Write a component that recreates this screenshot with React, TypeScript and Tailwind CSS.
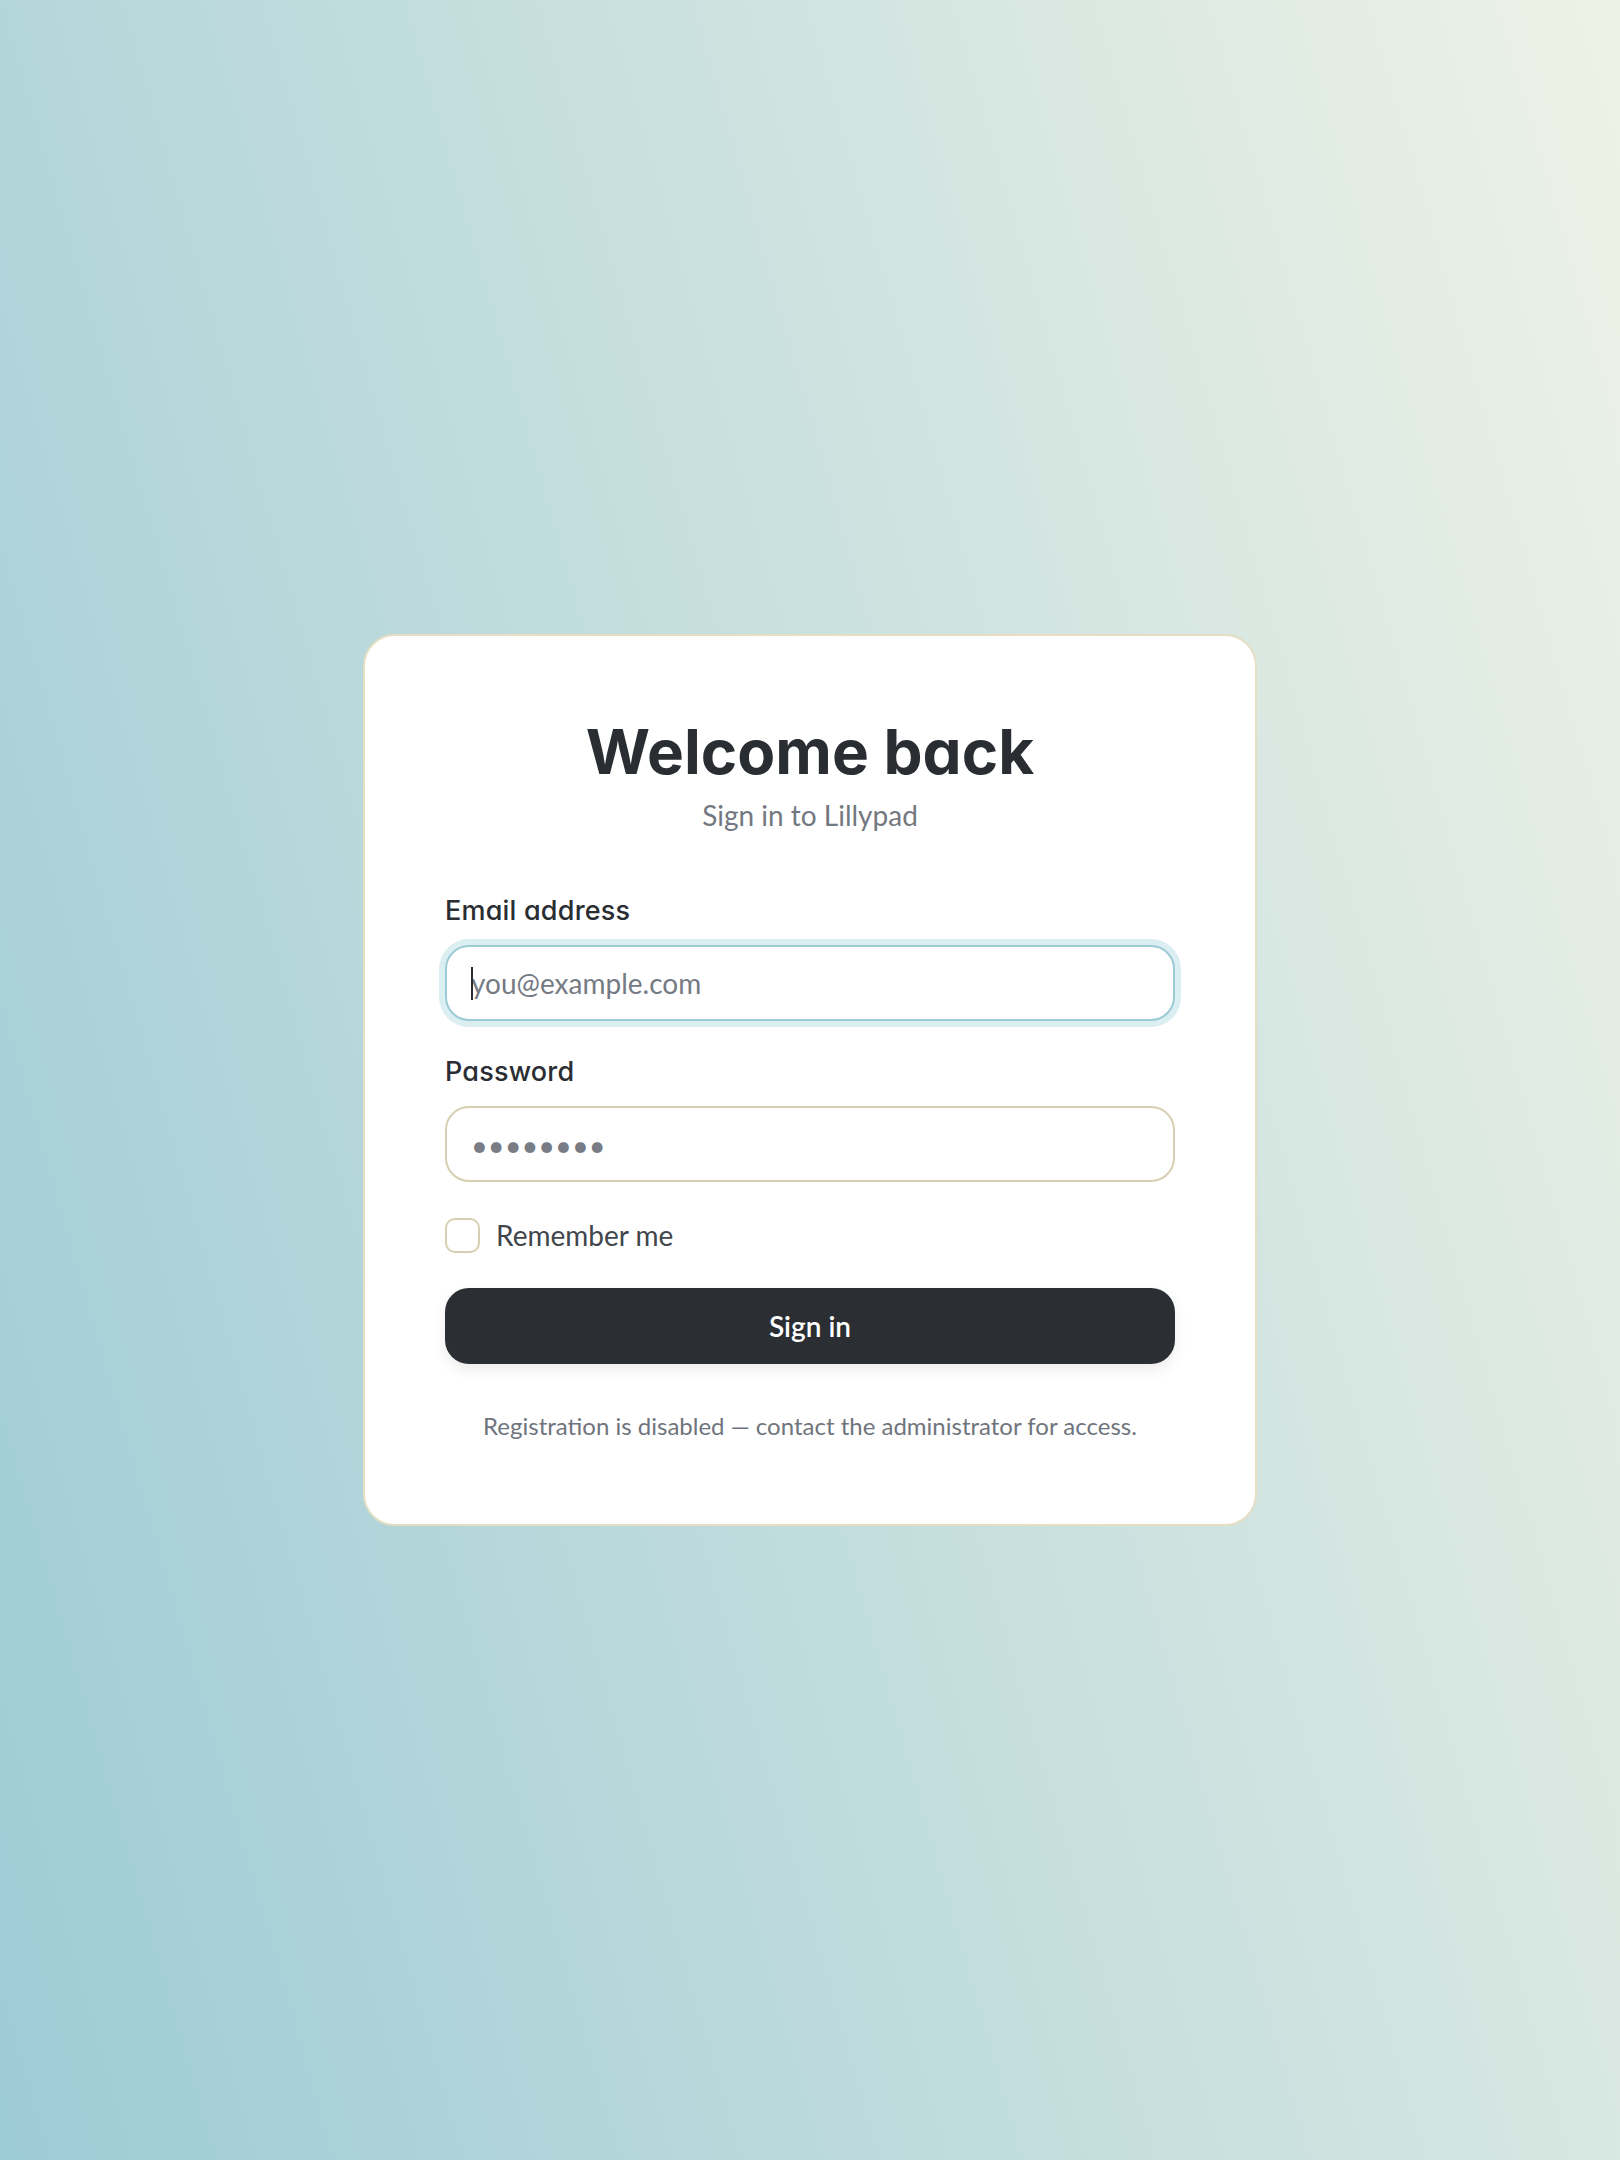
import React from "react";

export default function App() {
  return (
    <div className="min-h-screen w-full flex items-center justify-center bg-[linear-gradient(74deg,#9dcbd6,#eef2e6)] font-['Lato',sans-serif]">
      <div className="w-[894px] rounded-[32px] border-2 border-[#e5dec3] bg-white px-[80px] pt-[80px] pb-[80px] flex flex-col">
        <h1 className="text-center font-['Inter',sans-serif] [font-feature-settings:'cv11'] font-bold text-[62px] leading-[72px] text-[#2a2d32]">
          Welcome back
        </h1>
        <p className="mt-[7px] text-center text-[28px] leading-[40px] text-[#737881]">
          Sign in to Lillypad
        </p>

        <div className="mt-[58px] flex flex-col">
          <label className="font-['Inter',sans-serif] [font-feature-settings:'cv11'] font-medium text-[27px] leading-[36px] tracking-[0.2px] text-[#2a2d32]">
            Email address
          </label>
          <div className="relative mt-[16px]">
            <input
              type="email"
              placeholder="you@example.com"
              className="w-full h-[76px] rounded-[24px] border-2 border-[#9ccbd5] ring-[6px] ring-[#dbeef1] bg-white px-[24px] text-[28px] text-[#2a2d32] placeholder:text-[#757a83] outline-none caret-transparent"
            />
            <span className="absolute left-[26px] top-[22px] h-[33px] w-[2px] bg-[#2a2d32]" />
          </div>
        </div>

        <div className="mt-[33px] flex flex-col">
          <label className="font-['Inter',sans-serif] [font-feature-settings:'cv11'] font-medium text-[27px] leading-[36px] tracking-[0.2px] text-[#2a2d32]">
            Password
          </label>
          <input
            type="text"
            placeholder="••••••••"
            className="mt-[16px] w-full h-[76px] rounded-[24px] border-2 border-[#d7cfb1] bg-white px-[24px] text-[29px] text-[#2a2d32] placeholder:text-[#787c85] outline-none"
          />
        </div>

        <label className="mt-[36px] flex items-center gap-[16px]">
          <input
            type="checkbox"
            className="appearance-none w-[35px] h-[35px] rounded-[10px] border-2 border-[#d7cfb1] bg-white"
          />
          <span className="text-[28px] leading-[35px] text-[#41464d]">Remember me</span>
        </label>

        <button className="mt-[35px] w-full h-[76px] rounded-[24px] bg-[#2b2e33] text-white text-[28px] font-semibold shadow-[0_6px_14px_rgba(0,0,0,0.08)]">
          Sign in
        </button>

        <p className="mt-[44px] text-center text-[24px] leading-[36px] text-[#6f747d]">
          Registration is disabled — contact the administrator for access.
        </p>
      </div>
    </div>
  );
}
